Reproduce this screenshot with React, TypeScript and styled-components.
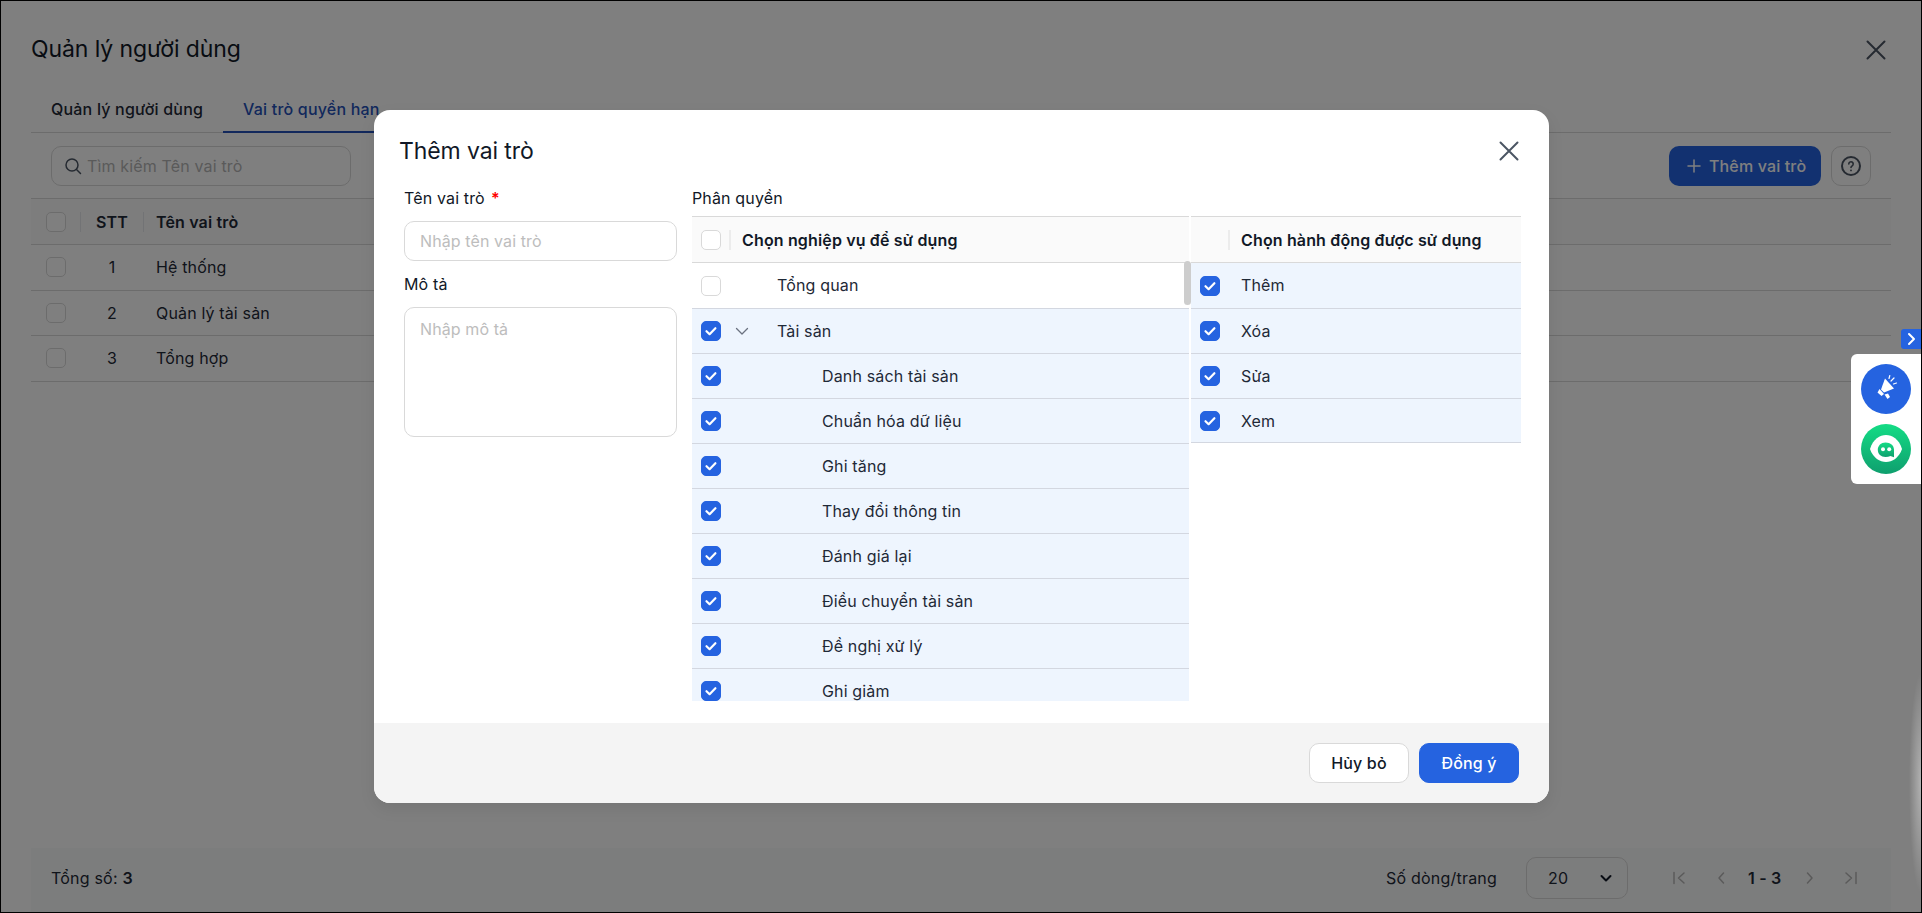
import styled, { createGlobalStyle } from 'styled-components';

const GlobalStyle = createGlobalStyle`
  * { box-sizing: border-box; }
  html, body { margin: 0; padding: 0; background: #fff; }
  body { font-family: Inter, "Noto Sans", sans-serif; color: #1f2937; letter-spacing: 0.15px; }
`;

const Screen = styled.div`
  position: relative;
  width: 1922px;
  height: 913px;
  border: 1px solid #000;
  overflow: hidden;
  background: #fff;
`;

const Page = styled.div`
  display: flex;
  flex-direction: column;
  height: 100%;
  padding: 0 30px;
`;

const PageHeader = styled.div`
  display: flex;
  align-items: center;
  justify-content: space-between;
  height: 89px;
  padding: 7px 5px 0 0;
`;

const PageTitle = styled.h1`
  margin: 0;
  font-size: 23px;
  line-height: 28px;
  font-weight: 400;
  letter-spacing: -0.1px;
  color: #111827;
`;

const Tabs = styled.div`
  display: flex;
  height: 43px;
  border-bottom: 1px solid #d9d9d9;
`;

const Tab = styled.div<{ $active?: boolean }>`
  display: flex;
  align-items: center;
  padding: 0 20px 4px;
  margin-bottom: -1px;
  font-size: 16px;
  font-weight: 500;
  letter-spacing: 0.2px;
  color: ${(p) => (p.$active ? '#2451b8' : '#1f2937')};
  border-bottom: 2px solid ${(p) => (p.$active ? '#2451b8' : 'transparent')};
`;

const Toolbar = styled.div`
  display: flex;
  align-items: center;
  justify-content: space-between;
  height: 65px;
  padding: 0 20px;
`;

const SearchBox = styled.div`
  display: flex;
  align-items: center;
  gap: 5px;
  width: 300px;
  height: 40px;
  padding: 0 12px;
  border: 1px solid #d9d9d9;
  border-radius: 10px;
  font-size: 16px;
  color: #b5b5b5;
`;

const ToolbarActions = styled.div`
  display: flex;
  gap: 10px;
`;

const AddButton = styled.div`
  display: flex;
  align-items: center;
  gap: 8px;
  height: 40px;
  width: 152px;
  padding-left: 18px;
  border-radius: 10px;
  background: #2563e0;
  color: #fff;
  font-size: 16px;
  font-weight: 500;
`;

const HelpButton = styled.div`
  display: flex;
  align-items: center;
  justify-content: center;
  width: 40px;
  height: 40px;
  border: 1px solid #d9d9d9;
  border-radius: 10px;
  color: #4b5563;
`;

const RoleTable = styled.div`
  border-top: 1px solid #d9d9d9;
`;

const RoleRow = styled.div<{ $head?: boolean }>`
  display: flex;
  align-items: center;
  height: ${(p) => (p.$head ? '46px' : '45.5px')};
  border-bottom: 1px solid #d9d9d9;
  background: ${(p) => (p.$head ? '#fafafa' : '#fff')};
  font-size: 16px;
  font-weight: ${(p) => (p.$head ? 600 : 400)};
`;

const RoleCheckCell = styled.div`
  display: flex;
  align-items: center;
  width: 49px;
  padding-left: 15px;
`;

const RoleNumCell = styled.div<{ $head?: boolean }>`
  width: 64px;
  text-align: center;
  border-left: ${(p) => (p.$head ? '1px solid #e5e7eb' : '1px solid transparent')};
  border-right: ${(p) => (p.$head ? '1px solid #e5e7eb' : '1px solid transparent')};
  line-height: 20px;
`;

const RoleNameCell = styled.div`
  padding-left: 12px;
`;

const PageFooter = styled.div`
  display: flex;
  align-items: center;
  justify-content: space-between;
  margin-top: auto;
  height: 64px;
  padding: 0 32px 4px 20px;
  background: #f9fafa;
  font-size: 16px;
  letter-spacing: 0.2px;
`;

const Total = styled.div`
  b { font-weight: 600; }
`;

const Pager = styled.div`
  display: flex;
  align-items: center;
`;

const PageSize = styled.div`
  display: flex;
  align-items: center;
  justify-content: space-between;
  width: 102px;
  height: 42px;
  margin: 0 43px 0 29px;
  padding: 0 14px 0 21px;
  border: 1px solid #d9d9d9;
  border-radius: 10px;
`;

const PagerIcons = styled.div`
  display: flex;
  align-items: center;
  color: #b5b5b5;
`;

const PagerRange = styled.span`
  width: 34px;
  margin: 0 20px 0 19px;
  white-space: nowrap;
  font-weight: 600;
  color: #1f2937;
`;

const Overlay = styled.div`
  position: absolute;
  inset: 0;
  display: flex;
  align-items: flex-start;
  padding: 109px 0 0 373px;
  background: rgba(0, 0, 0, 0.5);
`;

const Modal = styled.div`
  display: flex;
  flex-direction: column;
  width: 1175px;
  height: 693px;
  border-radius: 16px;
  background: #fff;
  overflow: hidden;
  box-shadow: 0 6px 16px rgba(0, 0, 0, 0.08);
`;

const ModalHeader = styled.div`
  display: flex;
  justify-content: space-between;
  height: 78px;
  padding: 29px 30px 0 25px;
`;

const ModalTitle = styled.h2`
  margin: 0;
  font-size: 23px;
  line-height: 24px;
  font-weight: 400;
  letter-spacing: -0.1px;
  color: #111827;
`;

const CloseIcon = styled.svg`
  display: block;
  width: 20px;
  height: 20px;
  margin-top: 2px;
  fill: none;
  stroke: #4b5563;
  stroke-width: 2;
  stroke-linecap: round;
`;

const ModalBody = styled.div`
  display: flex;
  flex: 1;
  min-height: 0;
  padding-left: 30px;
`;

const FormColumn = styled.div`
  width: 273px;
  margin-right: 15px;
`;

const FieldLabel = styled.div`
  height: 20px;
  font-size: 16px;
  line-height: 20px;
  color: #111827;
`;

const Required = styled.span`
  margin-left: 6px;
  color: #f00;
  font-weight: 600;
`;

const TextInput = styled.input`
  display: block;
  width: 100%;
  height: 40px;
  margin: 13px 0;
  padding: 0 15px;
  border: 1px solid #d9d9d9;
  border-radius: 10px;
  font: 400 16px Inter, sans-serif;
  letter-spacing: 0.1px;
  outline: none;
  &::placeholder { color: #bdbdbd; }
`;

const TextArea = styled.textarea`
  display: block;
  width: 100%;
  height: 130px;
  margin-top: 13px;
  padding: 11px 15px;
  border: 1px solid #d9d9d9;
  border-radius: 10px;
  font: 400 16px/20px Inter, sans-serif;
  letter-spacing: 0.1px;
  outline: none;
  resize: none;
  &::placeholder { color: #bdbdbd; }
`;

const PermissionColumn = styled.div`
  width: 829px;
`;

const PermissionTables = styled.div`
  display: flex;
  gap: 2px;
  margin-top: 8px;
`;

const TreePanel = styled.div`
  position: relative;
  width: 497px;
`;

const ActionPanel = styled.div`
  width: 330px;
`;

const PanelHead = styled.div<{ $indent?: number }>`
  display: flex;
  align-items: center;
  height: 47px;
  padding-left: ${(p) => p.$indent ?? 9}px;
  border-top: 1px solid #d9d9d9;
  border-bottom: 1px solid #d9d9d9;
  background: #fafafa;
  font-size: 16px;
  font-weight: 600;
  color: #111827;
`;

const HeadDivider = styled.span<{ $left: number }>`
  width: 2px;
  height: 20px;
  margin: 0 11px 0 ${(p) => p.$left}px;
  background: #ececec;
`;

const TreeBody = styled.div`
  height: 438px;
  overflow: hidden;
`;

const ActionBody = styled.div`
  & > div:last-child { height: 44px; }
`;

const PermRow = styled.div<{ $on?: boolean }>`
  display: flex;
  align-items: center;
  height: 45px;
  padding-left: 9px;
  border-bottom: 1px solid #d3d7e0;
  background: ${(p) => (p.$on ? '#eef5fe' : '#fff')};
  font-size: 16px;
  color: #1f2937;
  &:first-child { height: 46px; }
  &:first-child > span:last-child { margin-bottom: 2px; }
`;

const ChevronSlot = styled.span`
  display: flex;
  align-items: center;
  justify-content: center;
  width: 20px;
  margin-left: 11px;
  color: #6b7280;
`;

const TreeLabel = styled.span<{ $level: number }>`
  margin-left: ${(p) => 25 + p.$level * 45}px;
`;

const ActionLabel = styled.span`
  margin-left: 21px;
`;

const ScrollThumb = styled.div`
  position: absolute;
  top: 45px;
  right: -2px;
  width: 7px;
  height: 44px;
  border-radius: 4px;
  background: #cdcdcd;
`;

const ModalFooter = styled.div`
  display: flex;
  justify-content: flex-end;
  gap: 10px;
  height: 80px;
  padding: 20px 30px 0 0;
  background: #f4f4f4;
`;

const FooterButton = styled.div<{ $primary?: boolean }>`
  display: flex;
  align-items: center;
  justify-content: center;
  width: 100px;
  height: 40px;
  border: 1px solid ${(p) => (p.$primary ? '#2563e0' : '#d9d9d9')};
  border-radius: 10px;
  background: ${(p) => (p.$primary ? '#2563e0' : '#fff')};
  color: ${(p) => (p.$primary ? '#fff' : '#111827')};
  font-size: 16px;
  font-weight: 500;
`;

const CheckBox = styled.span<{ $on?: boolean }>`
  display: inline-flex;
  flex: none;
  align-items: center;
  justify-content: center;
  width: 20px;
  height: 20px;
  border: 1px solid ${(p) => (p.$on ? '#2563e0' : '#d9d9d9')};
  border-radius: 5px;
  background: ${(p) => (p.$on ? '#2563e0' : '#fff')};
`;

const SideToggle = styled.div`
  position: absolute;
  top: 328px;
  right: 0;
  display: flex;
  align-items: center;
  justify-content: center;
  width: 20px;
  height: 20px;
  background: #2563e0;
  border-radius: 3px 0 0 3px;
`;

const SideDock = styled.div`
  position: absolute;
  top: 353px;
  right: 0;
  display: flex;
  flex-direction: column;
  align-items: center;
  gap: 10px;
  width: 70px;
  height: 130px;
  padding-top: 10px;
  background: #fff;
  border-radius: 6px 0 0 6px;
`;

const EdgeGlow = styled.div`
  position: absolute;
  top: 672px;
  right: 0;
  width: 12px;
  height: 220px;
  background: radial-gradient(ellipse 100% 50% at 100% 50%, rgba(255, 255, 255, 0.4), rgba(255, 255, 255, 0));
`;

const Check = ({ on }: { on?: boolean }) => (
  <CheckBox $on={on}>
    {on && (
      <svg width="14" height="14" viewBox="0 0 14 14" fill="none" stroke="#fff" strokeWidth="2.2" strokeLinecap="round" strokeLinejoin="round">
        <path d="M2.5 7.2 5.6 10.2 11.4 4.2" />
      </svg>
    )}
  </CheckBox>
);

const Close = () => (
  <CloseIcon viewBox="0 0 20 20">
    <path d="M1.5 1.5 18.5 18.5M18.5 1.5 1.5 18.5" />
  </CloseIcon>
);

const roles = ['Hệ thống', 'Quản lý tài sản', 'Tổng hợp'];

const tree = [
  { label: 'Tổng quan', level: 0, on: false },
  { label: 'Tài sản', level: 0, on: true, chevron: true },
  { label: 'Danh sách tài sản', level: 1, on: true },
  { label: 'Chuẩn hóa dữ liệu', level: 1, on: true },
  { label: 'Ghi tăng', level: 1, on: true },
  { label: 'Thay đổi thông tin', level: 1, on: true },
  { label: 'Đánh giá lại', level: 1, on: true },
  { label: 'Điều chuyển tài sản', level: 1, on: true },
  { label: 'Đề nghị xử lý', level: 1, on: true },
  { label: 'Ghi giảm', level: 1, on: true },
];

const actions = ['Thêm', 'Xóa', 'Sửa', 'Xem'];

const pagerIcon = { width: 16, height: 16, viewBox: '0 0 16 16', fill: 'none', stroke: 'currentColor', strokeWidth: 1.5, strokeLinecap: 'round' as const, strokeLinejoin: 'round' as const };

export default function App() {
  return (
    <>
      <GlobalStyle />
      <Screen>
        <Page>
          <PageHeader>
            <PageTitle>Quản lý người dùng</PageTitle>
            <Close />
          </PageHeader>
          <Tabs>
            <Tab>Quản lý người dùng</Tab>
            <Tab $active>Vai trò quyền hạn</Tab>
          </Tabs>
          <Toolbar>
            <SearchBox>
              <svg width="18" height="18" viewBox="0 0 18 18" fill="none" stroke="#4b5563" strokeWidth="1.5" strokeLinecap="round">
                <circle cx="8" cy="8" r="6" />
                <path d="M12.5 12.5 16.5 16.5" />
              </svg>
              Tìm kiếm Tên vai trò
            </SearchBox>
            <ToolbarActions>
              <AddButton>
                <svg width="14" height="14" viewBox="0 0 14 14" stroke="#fff" strokeWidth="1.5" strokeLinecap="round">
                  <path d="M7 1V13M1 7H13" />
                </svg>
                Thêm vai trò
              </AddButton>
              <HelpButton>
                <svg width="20" height="20" viewBox="0 0 20 20" fill="none" stroke="currentColor" strokeWidth="2" strokeLinecap="round">
                  <circle cx="10" cy="10" r="9" />
                  <path strokeWidth="1.6" d="M7.8 8a2.2 2.2 0 1 1 3.4 1.8c-.8.5-1.2 1-1.2 1.7" />
                  <path strokeWidth="1.8" d="M10 14.3v.1" />
                </svg>
              </HelpButton>
            </ToolbarActions>
          </Toolbar>
          <RoleTable>
            <RoleRow $head>
              <RoleCheckCell><Check /></RoleCheckCell>
              <RoleNumCell $head>STT</RoleNumCell>
              <RoleNameCell>Tên vai trò</RoleNameCell>
            </RoleRow>
            {roles.map((role, i) => (
              <RoleRow key={role}>
                <RoleCheckCell><Check /></RoleCheckCell>
                <RoleNumCell>{i + 1}</RoleNumCell>
                <RoleNameCell>{role}</RoleNameCell>
              </RoleRow>
            ))}
          </RoleTable>
          <PageFooter>
            <Total>Tổng số: <b>3</b></Total>
            <Pager>
              Số dòng/trang
              <PageSize>
                20
                <svg width="14" height="14" viewBox="0 0 14 14" fill="none" stroke="#111827" strokeWidth="2" strokeLinecap="round" strokeLinejoin="round">
                  <path d="M2.5 5 7 9.5 11.5 5" />
                </svg>
              </PageSize>
              <PagerIcons>
                <svg {...pagerIcon} style={{ marginRight: 26 }}><path d="M3 2.5V13.5M13 3 7.5 8 13 13" /></svg>
                <svg {...pagerIcon}><path d="M10.5 3 6 8 10.5 13" /></svg>
                <PagerRange>1 - 3</PagerRange>
                <svg {...pagerIcon} style={{ marginRight: 25 }}><path d="M5.5 3 10 8 5.5 13" /></svg>
                <svg {...pagerIcon}><path d="M13 2.5V13.5M3 3 8.5 8 3 13" /></svg>
              </PagerIcons>
            </Pager>
          </PageFooter>
        </Page>

        <Overlay>
          <Modal>
            <ModalHeader>
              <ModalTitle>Thêm vai trò</ModalTitle>
              <Close />
            </ModalHeader>
            <ModalBody>
              <FormColumn>
                <FieldLabel>Tên vai trò<Required>*</Required></FieldLabel>
                <TextInput placeholder="Nhập tên vai trò" />
                <FieldLabel>Mô tả</FieldLabel>
                <TextArea placeholder="Nhập mô tả" />
              </FormColumn>
              <PermissionColumn>
                <FieldLabel>Phân quyền</FieldLabel>
                <PermissionTables>
                  <TreePanel>
                    <PanelHead>
                      <Check />
                      <HeadDivider $left={8} />
                      Chọn nghiệp vụ để sử dụng
                    </PanelHead>
                    <TreeBody>
                      {tree.map((node) => (
                        <PermRow key={node.label} $on={node.on}>
                          <Check on={node.on} />
                          <ChevronSlot>
                            {node.chevron && (
                              <svg width="14" height="14" viewBox="0 0 14 14" fill="none" stroke="currentColor" strokeWidth="1.3" strokeLinecap="round" strokeLinejoin="round">
                                <path d="M1.5 4.5 7 10 12.5 4.5" />
                              </svg>
                            )}
                          </ChevronSlot>
                          <TreeLabel $level={node.level}>{node.label}</TreeLabel>
                        </PermRow>
                      ))}
                    </TreeBody>
                    <ScrollThumb />
                  </TreePanel>
                  <ActionPanel>
                    <PanelHead $indent={0}>
                      <HeadDivider $left={37} />
                      Chọn hành động được sử dụng
                    </PanelHead>
                    <ActionBody>
                      {actions.map((action) => (
                        <PermRow key={action} $on>
                          <Check on />
                          <ActionLabel>{action}</ActionLabel>
                        </PermRow>
                      ))}
                    </ActionBody>
                  </ActionPanel>
                </PermissionTables>
              </PermissionColumn>
            </ModalBody>
            <ModalFooter>
              <FooterButton>Hủy bỏ</FooterButton>
              <FooterButton $primary>Đồng ý</FooterButton>
            </ModalFooter>
          </Modal>
        </Overlay>

        <EdgeGlow />
        <SideToggle>
          <svg width="12" height="14" viewBox="0 0 12 14" fill="none" stroke="#fff" strokeWidth="2" strokeLinecap="round" strokeLinejoin="round">
            <path d="M4 2 9 7 4 12" />
          </svg>
        </SideToggle>
        <SideDock>
          <svg width="50" height="50" viewBox="0 0 50 50">
            <circle cx="25" cy="25" r="25" fill="#2563e0" />
            <path fill="#fff" d="M24 14.5 33 24.5 23 28.5 20 25.5Z" />
            <path fill="#fff" d="M18.5 25 23 30 20.5 32 16.5 28.5Z" />
            <path fill="#fff" d="M23.5 30.5 27 29.5 29 33 26.5 35Z" />
            <path fill="none" stroke="#fff" strokeWidth="1.2" strokeLinecap="round" d="M30 17 33 14M28 14.5 28.8 11.5M32.5 20 35.5 19" />
          </svg>
          <svg width="50" height="50" viewBox="0 0 50 50">
            <defs>
              <linearGradient id="botFill" x1="0" y1="0" x2="0" y2="1">
                <stop offset="0" stopColor="#14dc85" />
                <stop offset="1" stopColor="#0f9f6e" />
              </linearGradient>
            </defs>
            <circle cx="25" cy="25" r="25" fill="url(#botFill)" />
            <path fill="#fff" d="M9 25C12 15 19 11 25 11S38 15 41 25C38 34 31 38 25 38S12 34 9 25Z" />
            <path fill="url(#botFill)" d="M24.5 18.5C29.5 18.5 33 21.5 33 25.8V33.2L29.5 32C28 32.6 26.4 33 24.5 33 20 33 16.8 30 16.8 25.8S20 18.5 24.5 18.5Z" />
            <circle cx="22" cy="25.3" r="2" fill="#fff" />
            <circle cx="28.2" cy="25.3" r="2" fill="#fff" />
          </svg>
        </SideDock>
      </Screen>
    </>
  );
}
